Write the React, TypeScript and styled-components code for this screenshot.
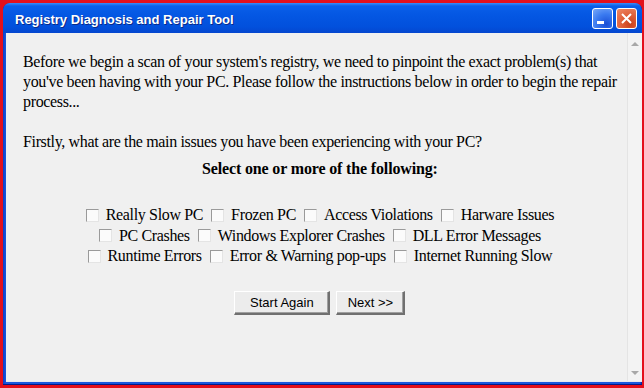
import React from "react";
import styled, { createGlobalStyle } from "styled-components";

const GlobalStyle = createGlobalStyle`
    html, body {
        margin: 0;
        padding: 0;
        background: #e3101c;
        width: 644px;
        height: 388px;
        overflow: hidden;
    }
`;

const Window = styled.div`
    margin: 3px 0 0 3px;
    width: 639px;
    height: 382px;
    display: flex;
    flex-direction: column;
    border-radius: 7px 7px 0 0;
    background: linear-gradient(to right, #0b3ec9 0, #1a58dc 3px, #1a58dc calc(100% - 2px), #001c8c 100%);
    box-shadow: inset 0 -1px 0 #001c8c;
    overflow: hidden;
`;

const TitleBar = styled.div`
    height: 30px;
    flex: 0 0 30px;
    display: flex;
    align-items: center;
    justify-content: space-between;
    padding: 0 5px 0 12px;
    background: linear-gradient(to bottom, #3a8cf7 0, #0a5fe9 3px, #0457e3 12px, #0250dc 24px, #0547cf 30px);
    border-radius: 7px 7px 0 0;
`;

const Title = styled.span`
    font-family: "Liberation Sans", Arial, sans-serif;
    font-weight: bold;
    font-size: 13px;
    color: #ffffff;
    text-shadow: 1px 1px 0 #0a2a8a;
    padding-top: 3px;
`;

const Controls = styled.div`
    display: flex;
    gap: 3px;
    align-items: center;
    margin-top: 1px;
`;

const CtrlButton = styled.div<{ $close?: boolean }>`
    width: 19px;
    height: 19px;
    border: 1px solid #ffffff;
    border-radius: 3px;
    display: flex;
    align-items: center;
    justify-content: center;
    background: ${({ $close }) =>
        $close
            ? "radial-gradient(circle at 70% 80%, #c8401c 0, #e0603a 45%, #ee8a68 100%)"
            : "radial-gradient(circle at 70% 80%, #1a4fd6 0, #3a7af0 50%, #7aaaf8 100%)"};
`;

const Frame = styled.div`
    flex: 1;
    display: flex;
    padding: 0 6px 3px 3px;
    min-height: 0;
`;

const Client = styled.div`
    flex: 1;
    display: flex;
    background: #f0f0f0;
    border-bottom: 1px solid #e8e8f0;
`;

const Content = styled.div`
    flex: 1;
    padding: 19px 10px 0 17px;
    font-family: "Liberation Serif", "Times New Roman", serif;
    font-size: 16px;
    line-height: 20px;
    letter-spacing: -0.35px;
    color: #000000;
`;

const Para = styled.p<{ $gap?: number }>`
    margin: ${({ $gap }) => $gap ?? 0}px 0 0 0;
    white-space: nowrap;
`;

const Heading = styled.div`
    margin-top: 7px;
    text-align: center;
    font-weight: bold;
    letter-spacing: -0.15px;
`;

const Options = styled.div`
    margin-top: 26px;
    display: flex;
    flex-direction: column;
    align-items: center;
    line-height: 20.5px;
`;

const OptionRow = styled.div`
    display: flex;
    align-items: center;
    gap: 8px;
`;

const Option = styled.label`
    display: flex;
    align-items: center;
    gap: 7px;
`;

const Box = styled.span`
    width: 11px;
    height: 11px;
    background: #fbfbfb;
    border-top: 1px solid #9a9a9a;
    border-left: 1px solid #9a9a9a;
    border-right: 1px solid #e4e4e4;
    border-bottom: 1px solid #e4e4e4;
`;

const ButtonRow = styled.div`
    margin-top: 24px;
    display: flex;
    justify-content: center;
    gap: 6px;
`;

const PushButton = styled.button<{ $w: number }>`
    width: ${({ $w }) => $w}px;
    height: 24px;
    padding: 0;
    font-family: "Liberation Sans", Arial, sans-serif;
    font-size: 13px;
    letter-spacing: 0;
    color: #000;
    background: #ececec;
    border-top: 1px solid #ffffff;
    border-left: 1px solid #ffffff;
    border-right: 2px solid #707070;
    border-bottom: 2px solid #707070;
    box-shadow: inset -1px -1px 0 #a0a0a0;
`;

const Scrollbar = styled.div`
    width: 14px;
    display: flex;
    flex-direction: column;
    justify-content: space-between;
    align-items: center;
    padding: 9px 0 6px;
    background: #f3f3f3;
    border-left: 1px solid #e4e4e4;
`;

const Arrow = styled.span<{ $down?: boolean }>`
    width: 0;
    height: 0;
    border-left: 4px solid transparent;
    border-right: 4px solid transparent;
    ${({ $down }) => ($down ? "border-top: 4px solid #a8a8a8;" : "border-bottom: 4px solid #a8a8a8;")}
`;

const rows = [
    ["Really Slow PC", "Frozen PC", "Access Violations", "Harware Issues"],
    ["PC Crashes", "Windows Explorer Crashes", "DLL Error Messages"],
    ["Runtime Errors", "Error & Warning pop-ups", "Internet Running Slow"],
];

const App: React.FC = () => {
    return (
        <>
            <GlobalStyle />
            <Window>
                <TitleBar>
                    <Title>Registry Diagnosis and Repair Tool</Title>
                    <Controls>
                        <CtrlButton>
                            <svg width='19' height='19' viewBox='0 0 19 19'>
                                <rect x='4' y='12' width='7' height='3' fill='#fff' />
                            </svg>
                        </CtrlButton>
                        <CtrlButton $close>
                            <svg width='19' height='19' viewBox='0 0 19 19'>
                                <path d='M5 5 L14 14 M14 5 L5 14' stroke='#fff' strokeWidth='2' />
                            </svg>
                        </CtrlButton>
                    </Controls>
                </TitleBar>
                <Frame>
                    <Client>
                        <Content>
                            <Para>
                                Before we begin a scan of your system's registry, we need to pinpoint the exact
                                problem(s) that
                                <br />
                                you've been having with your PC. Please follow the instructions below in order to
                                begin the repair
                                <br />
                                process...
                            </Para>
                            <Para $gap={20}>Firstly, what are the main issues you have been experiencing with your PC?</Para>
                            <Heading>Select one or more of the following:</Heading>
                            <Options>
                                {rows.map((row, i) => (
                                    <OptionRow key={i}>
                                        {row.map((label) => (
                                            <Option key={label}>
                                                <Box />
                                                {label}
                                            </Option>
                                        ))}
                                    </OptionRow>
                                ))}
                            </Options>
                            <ButtonRow>
                                <PushButton $w={96}>Start Again</PushButton>
                                <PushButton $w={69}>Next &gt;&gt;</PushButton>
                            </ButtonRow>
                        </Content>
                        <Scrollbar>
                            <Arrow />
                            <Arrow $down />
                        </Scrollbar>
                    </Client>
                </Frame>
            </Window>
        </>
    );
};

export default App;
